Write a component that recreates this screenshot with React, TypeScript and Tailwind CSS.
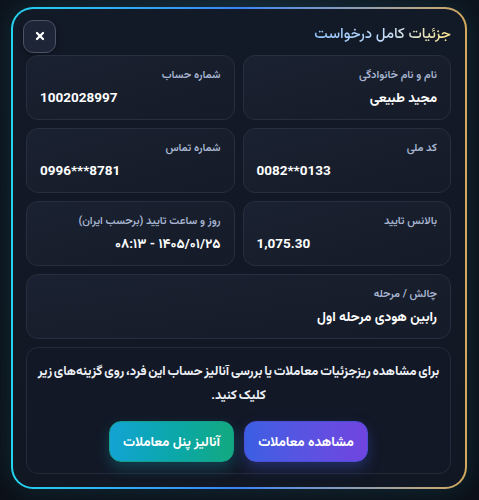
import React from 'react';
import { X } from 'lucide-react';

interface InfoCardProps {
  label: string;
  value: string;
  ltr?: boolean;
  wide?: boolean;
}

const InfoCard: React.FC<InfoCardProps> = ({ label, value, ltr, wide }) => {
  return (
    <div
      className={`rounded-xl border border-[#262e3f] bg-gradient-to-br from-[#1a2130] to-[#151b28] px-[13px] pt-[11px] pb-[12px] ${
        wide ? 'col-span-2' : ''
      }`}
    >
      <div className="text-[11px] leading-[16px] font-semibold text-[#a8b6d2]">
        {label}
      </div>
      <div
        dir={ltr ? 'ltr' : 'rtl'}
        className={`mt-[4px] text-[13.5px] leading-[20px] font-bold text-white ${
          ltr ? 'text-left' : 'text-right'
        }`}
      >
        {value}
      </div>
    </div>
  );
};

export default function App() {
  const fontStack =
    "font-['Roboto','Vazirmatn','Noto_Sans_Arabic','Noto_Naskh_Arabic','DejaVu_Sans',sans-serif]";

  return (
    <div
      dir="rtl"
      className={`h-[500px] w-[479px] overflow-hidden bg-[radial-gradient(ellipse_at_top,#14202c_0%,#0e141d_60%,#0c1119_100%)] pt-[7px] pl-[11px] pr-[12px] ${fontStack}`}
    >
      {/* gradient frame: cyan -> blue -> gold */}
      <div className="rounded-[22px] bg-gradient-to-r from-[#22d3ee] via-[#3b82f6] to-[#d4a85a] p-[2px] shadow-[0_0_24px_rgba(34,211,238,0.12)]">
        <div className="rounded-[20px] bg-gradient-to-b from-[#131a27] to-[#111723] px-[13px] pt-[10px] pb-[13px]">
          <div className="mb-[2px] flex h-[34px] items-center justify-between">
            <h2 className="mb-[6px] bg-gradient-to-l from-[#fde68a] via-[#bfdbfe] to-[#93c5fd] bg-clip-text pr-[1px] text-[15px] font-medium text-transparent">
              جزئیات کامل درخواست
            </h2>
            <button
              type="button"
              aria-label="بستن"
              className="ml-[-3px] flex h-[33px] w-[33px] items-center justify-center rounded-[10px] border border-[#4a5368] bg-[#1d2537] text-white shadow-[0_2px_6px_rgba(0,0,0,0.35)]"
            >
              <X className="h-[12px] w-[12px]" strokeWidth={4.5} />
            </button>
          </div>

          <div className="grid grid-cols-2 gap-[8px] pr-[1px]">
            <InfoCard label="نام و نام خانوادگی" value="مجید طبیعی" />
            <InfoCard label="شماره حساب" value="1002028997" ltr />
            <InfoCard label="کد ملی" value="0082**0133" ltr />
            <InfoCard label="شماره تماس" value="0996***8781" ltr />
            <InfoCard label="بالانس تایید" value="1,075.30" ltr />
            <InfoCard
              label="روز و ساعت تایید (برحسب ایران)"
              value="۱۴۰۵/۰۱/۲۵ - ۰۸:۱۳"
            />
            <InfoCard label="چالش / مرحله" value="رابین هودی مرحله اول" wide />

            <div className="col-span-2 rounded-xl border border-[#232b3b] bg-[#121826] px-[8px] pt-[11px] pb-[11px]">
              <p className="text-center text-[13px] leading-[24px] font-bold whitespace-nowrap text-[#eef1f6] [word-spacing:-1.5px]">
                برای مشاهده ریزجزئیات معاملات یا بررسی آنالیز حساب این فرد، روی
                گزینه‌های زیر
                <br />
                کلیک کنید.
              </p>
              <div className="mt-[14px] flex justify-center gap-[10px]">
                <button
                  type="button"
                  className="h-[41px] w-[124px] rounded-xl border border-[#4c4fd6] bg-gradient-to-r from-[#3a5fe3] to-[#7044e0] text-[13.5px] font-bold text-white shadow-[0_6px_14px_rgba(70,90,220,0.35)]"
                >
                  مشاهده معاملات
                </button>
                <button
                  type="button"
                  className="h-[41px] w-[125px] rounded-xl border border-[#169e8c] bg-gradient-to-r from-[#14a3d3] to-[#13a980] text-[13.5px] font-bold text-white shadow-[0_6px_14px_rgba(20,160,180,0.3)]"
                >
                  آنالیز پنل معاملات
                </button>
              </div>
            </div>
          </div>
        </div>
      </div>
    </div>
  );
}
